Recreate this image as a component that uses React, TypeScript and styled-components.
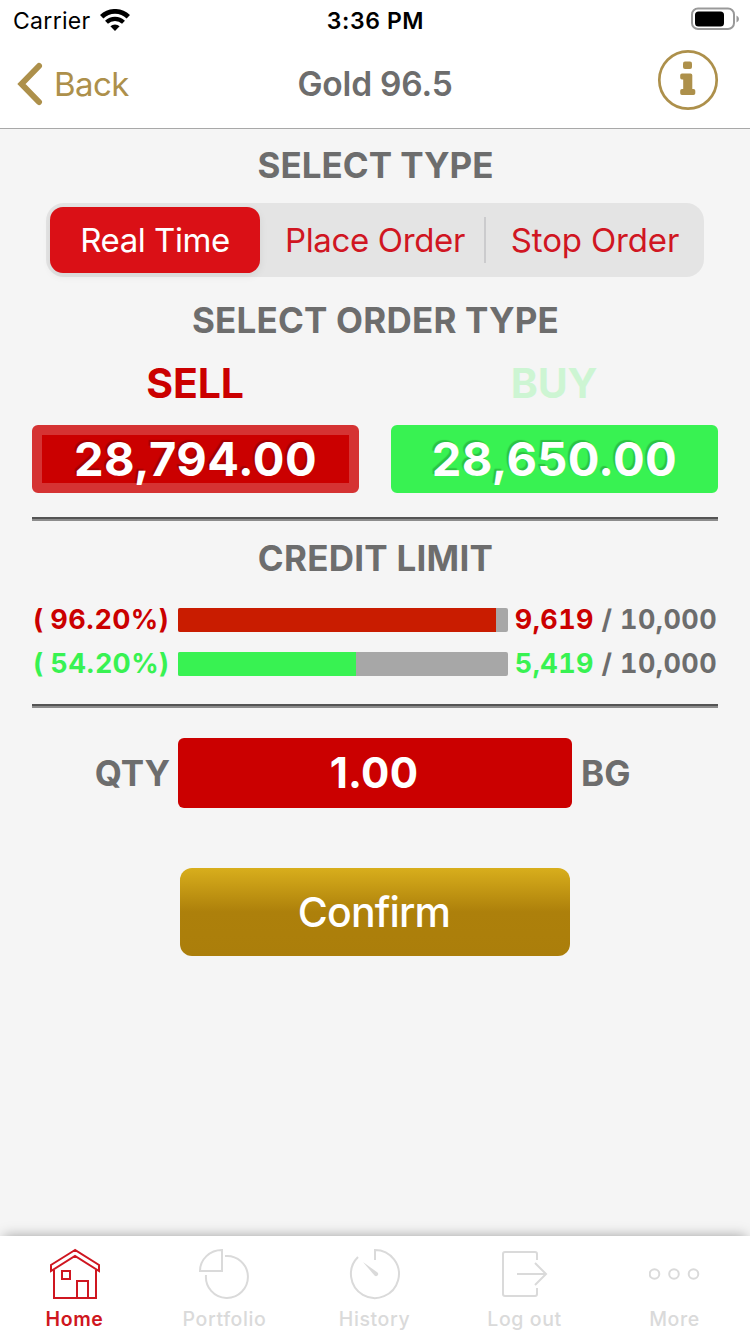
import React from "react";
import styled, { createGlobalStyle } from "styled-components";

const GREY = "#6d6d6d";
const GOLD = "#ad904b";
const RED = "#cb0000";
const GREEN = "#38f252";

const GlobalStyle = createGlobalStyle`
  * { box-sizing: border-box; }
  body { margin: 0; background: #f5f5f5; }
  button { border: 0; padding: 0; margin: 0; background: none; font: inherit; color: inherit; }
`;

const Screen = styled.div`
  width: 750px;
  height: 1334px;
  display: flex;
  flex-direction: column;
  overflow: hidden;
  background: #f5f5f5;
  color: ${GREY};
  font-family: Inter, "Liberation Sans", sans-serif;
  white-space: nowrap;
`;

const Header = styled.header`
  height: 129px;
  flex: none;
  background: #fff;
  border-bottom: 1px solid #a8a8a8;
`;

const StatusBar = styled.div`
  height: 40px;
  display: grid;
  grid-template-columns: 1fr auto 1fr;
  align-items: center;
  padding: 0 11px 0 13px;
  color: #000;
`;

const Carrier = styled.div`
  display: flex;
  align-items: center;
  gap: 9px;
  font-size: 23px;
  line-height: 40px;
  letter-spacing: 0.3px;
  padding-top: 1px;
`;

const Clock = styled.div`
  font-size: 23px;
  font-weight: 600;
  line-height: 40px;
  letter-spacing: 0.6px;
  padding-top: 1px;
  margin-left: -1px;
`;

const BatteryIcon = styled.svg`
  justify-self: end;
  margin-bottom: 3px;
`;

const NavBar = styled.div`
  height: 88px;
  display: grid;
  grid-template-columns: 1fr auto 1fr;
  align-items: center;
  padding: 0 31px 0 17px;
`;

const BackButton = styled.button`
  display: flex;
  align-items: center;
  gap: 11px;
  color: ${GOLD};
  font-size: 33px;
  line-height: 88px;
  letter-spacing: -0.6px;
`;

const Title = styled.h1`
  margin: 0 0 0 14px;
  font-size: 33.5px;
  font-weight: 600;
  line-height: 88px;
  letter-spacing: -0.2px;
`;

const InfoButton = styled.button`
  justify-self: end;
  display: flex;
  margin-bottom: 8px;
`;

const Main = styled.main`
  flex: 1;
  padding: 0 32px;
  display: flex;
  flex-direction: column;
`;

const SectionTitle = styled.h2<{ $height: number; $line?: number; $spacing?: number }>`
  margin: 0;
  padding-left: 1px;
  height: ${(p) => p.$height}px;
  line-height: ${(p) => p.$line ?? p.$height}px;
  text-align: center;
  font-size: 35px;
  font-weight: 700;
  letter-spacing: ${(p) => p.$spacing ?? 0}px;
`;

const Segments = styled.div`
  height: 74px;
  margin: 0 14px;
  padding: 4px 0 4px 4px;
  display: grid;
  grid-template-columns: 210px 6px 218px 2px 218px;
  align-items: center;
  border-radius: 18px;
  background: #e4e4e4;
`;

const Segment = styled.button<{ $active?: boolean; $spacing: number }>`
  height: 66px;
  border-radius: 13px;
  font-size: 33px;
  letter-spacing: ${(p) => p.$spacing}px;
  text-align: center;
  color: ${(p) => (p.$active ? "#fff" : "#d01622")};
  background: ${(p) => (p.$active ? "#da1016" : "transparent")};
  box-shadow: ${(p) => (p.$active ? "0 3px 8px rgba(0,0,0,.07)" : "none")};
`;

const SegmentDivider = styled.span<{ $visible?: boolean }>`
  height: 46px;
  background: ${(p) => (p.$visible ? "#cbcbcd" : "transparent")};
`;

const OrderSides = styled.div`
  display: grid;
  grid-template-columns: 1fr 1fr;
  column-gap: 32px;
`;

const SideLabel = styled.div<{ $color: string }>`
  height: 60px;
  line-height: 37px;
  padding-right: 1px;
  text-align: center;
  font-size: 41px;
  font-weight: 700;
  letter-spacing: -0.2px;
  color: ${(p) => p.$color};
`;

const PriceButton = styled.button<{ $color: string; $frame?: string; $spacing: number }>`
  height: 68px;
  border-radius: 6px;
  border: 10px solid ${(p) => p.$frame ?? p.$color};
  background: ${(p) => p.$color};
  color: #fff;
  font-size: 47px;
  font-weight: 700;
  line-height: 48px;
  letter-spacing: ${(p) => p.$spacing}px;
  text-shadow: -2px -2px 1px rgba(0, 0, 0, 0.2);
`;

const Rule = styled.hr`
  width: 100%;
  height: 4px;
  flex: none;
  margin: 0;
  border: 0;
  border-top: 2px solid #545454;
  background: #8c8c8c;
`;

const CreditList = styled.div`
  display: flex;
  flex-direction: column;
  padding: 3px 0 18px;
`;

const CreditRow = styled.div`
  height: 44px;
  display: grid;
  grid-template-columns: 146px 330px 1fr;
  align-items: center;
  font-size: 27px;
  font-weight: 650;
  line-height: 44px;
  letter-spacing: 0.4px;
`;

const Percent = styled.span<{ $color: string }>`
  padding-left: 1px;
  color: ${(p) => p.$color};
`;

const Track = styled.div`
  height: 24px;
  border-radius: 2px;
  overflow: hidden;
  background: #a7a7a7;
`;

const Fill = styled.div<{ $color: string }>`
  height: 100%;
  background: ${(p) => p.$color};
`;

const Amount = styled.span`
  text-align: right;
  padding-right: 1px;
  font-variant-numeric: tabular-nums;
`;

const Used = styled.span<{ $color: string }>`
  color: ${(p) => p.$color};
`;

const QuantityRow = styled.div`
  margin-top: 30px;
  display: grid;
  grid-template-columns: 138px 394px 1fr;
  column-gap: 8px;
  align-items: center;
  font-size: 35px;
  font-weight: 650;
`;

const QuantityLabel = styled.label`
  text-align: right;
`;

const QuantityUnit = styled.span`
  padding-left: 1px;
`;

const QuantityInput = styled.div`
  height: 70px;
  padding-right: 2px;
  border-radius: 6px;
  background: ${RED};
  color: #fff;
  font-size: 42px;
  font-weight: 650;
  line-height: 70px;
  letter-spacing: 0.2px;
  text-align: center;
`;

const ConfirmButton = styled.button`
  align-self: center;
  width: 390px;
  height: 88px;
  margin-top: 60px;
  padding-right: 2px;
  border-radius: 12px;
  background: linear-gradient(#d8ae1c 0%, #ad800b 50%, #ab7e0b 100%);
  color: #fff;
  font-size: 41px;
  font-weight: 550;
  line-height: 88px;
  letter-spacing: -0.85px;
`;

const TabBar = styled.nav`
  height: 98px;
  flex: none;
  display: grid;
  grid-template-columns: repeat(5, 1fr);
  background: #fff;
  box-shadow: 0 -4px 12px -4px rgba(0, 0, 0, 0.35);
`;

const Tab = styled.button<{ $active?: boolean }>`
  display: flex;
  flex-direction: column;
  align-items: center;
  padding-top: 12px;
  color: ${(p) => (p.$active ? "#cf1620" : "#dadada")};
  font-size: 19.5px;
  font-weight: ${(p) => (p.$active ? 560 : 500)};
  letter-spacing: 0.6px;
  line-height: 24px;

  svg {
    margin-bottom: 7px;
    fill: none;
    stroke: currentColor;
    stroke-width: 2;
  }
`;

const TabLabel = styled.span`
  padding-right: 1px;
`;

const WifiGlyph = () => (
  <svg width="30" height="24" viewBox="0 0 30 24" fill="none" stroke="#000">
    <path d="M1.700 7.800a19 19 0 0 1 26.600 0" strokeWidth="4.800" />
    <path d="M6.500 13.300a12.300 12.300 0 0 1 17 0" strokeWidth="4.200" />
    <path d="M15 21.900l-4.600-4.600a6.600 6.600 0 0 1 9.200 0z" fill="#000" stroke="none" />
  </svg>
);

const HomeIcon = () => (
  <svg width="52" height="52" viewBox="0 0 52 52">
    <path d="M26 2L2 17v6L26 8l24 15v-6zM5 22v28h42V22M13 23h8v8h-8zM28 50V33h11v17" />
  </svg>
);

const PortfolioIcon = () => (
  <svg width="52" height="52" viewBox="0 0 52 52">
    <path d="M23 2v21H1A22 21 0 0 1 23 2zM26 8a21 21 0 1 1-19 19" />
  </svg>
);

const HistoryIcon = () => (
  <svg width="52" height="52" viewBox="0 0 52 52">
    <path d="M26 12V2a24 24 0 1 1-17 7" />
    <path d="M14 14l14.500 10.500a2 2 0 0 1-3 3z" fill="currentColor" stroke="none" />
  </svg>
);

const LogoutIcon = () => (
  <svg width="52" height="52" viewBox="0 0 52 52">
    <path d="M38 12V6a2 2 0 0 0-2-2H6a2 2 0 0 0-2 2v40a2 2 0 0 0 2 2h30a2 2 0 0 0 2-2v-6M18 26h29M36 15l11 11-11 11" />
  </svg>
);

const MoreIcon = () => (
  <svg width="52" height="52" viewBox="0 0 52 52">
    <circle cx="5.500" cy="26" r="4.800" />
    <circle cx="25" cy="26" r="4.800" />
    <circle cx="44.500" cy="26" r="4.800" />
  </svg>
);

const credit = [
  { percent: "( 96.20%)", share: 96.4, used: "9,619", color: RED, bar: "#c91c00" },
  { percent: "( 54.20%)", share: 53.9, used: "5,419", color: GREEN, bar: GREEN },
];

const tabs = [
  { label: "Home", Icon: HomeIcon },
  { label: "Portfolio", Icon: PortfolioIcon },
  { label: "History", Icon: HistoryIcon },
  { label: "Log out", Icon: LogoutIcon },
  { label: "More", Icon: MoreIcon },
];

const Gap = styled.div<{ $size: number }>`
  height: ${(p) => p.$size}px;
  flex: none;
`;

export default function App() {
  return (
    <Screen>
      <GlobalStyle />
      <Header>
        <StatusBar>
          <Carrier>
            Carrier
            <WifiGlyph />
          </Carrier>
          <Clock>3:36 PM</Clock>
          <BatteryIcon width="48" height="24" viewBox="0 0 48 24">
            <rect x="1" y="1.500" width="42" height="20.500" rx="6" fill="none" stroke="#999" strokeWidth="2" />
            <rect x="4" y="4.500" width="29" height="15" rx="3.500" fill="#000" />
            <path d="M45.500 8.500q2.500 1 2.500 3.500t-2.500 3.500z" fill="#999" />
          </BatteryIcon>
        </StatusBar>
        <NavBar>
          <BackButton>
            <svg width="26" height="44" viewBox="0 0 26 44" fill="none" stroke={GOLD} strokeWidth="6" strokeLinecap="round" strokeLinejoin="miter">
              <path d="M22 4L4.500 22l17.500 18" />
            </svg>
            Back
          </BackButton>
          <Title>Gold 96.5</Title>
          <InfoButton aria-label="Info">
            <svg width="62" height="62" viewBox="0 0 62 62">
              <circle cx="31" cy="31" r="28.700" fill="none" stroke={GOLD} strokeWidth="2.700" />
              <rect x="26" y="12.500" width="9" height="7.500" rx="2" fill={GOLD} />
              <path d="M25 24.500h8.500a1.800 1.800 0 0 1 1.800 1.800V40h1.200a1.800 1.800 0 0 1 1.800 1.800v2.400a1.800 1.800 0 0 1-1.800 1.800H25a1.800 1.800 0 0 1-1.800-1.800v-2.400a1.800 1.800 0 0 1 1.800-1.800h1.200V30.500H25a1.800 1.800 0 0 1-1.800-1.800v-2.400A1.800 1.800 0 0 1 25 24.500z" fill={GOLD} />
            </svg>
          </InfoButton>
        </NavBar>
      </Header>
      <Main>
        <SectionTitle $height={74} $line={73}>SELECT TYPE</SectionTitle>
        <Segments>
          <Segment $active $spacing={-0.45}>Real Time</Segment>
          <SegmentDivider />
          <Segment $spacing={-0.35}>Place Order</Segment>
          <SegmentDivider $visible />
          <Segment $spacing={-0.15}>Stop Order</Segment>
        </Segments>
        <SectionTitle $height={88} $line={87} $spacing={0.2}>SELECT ORDER TYPE</SectionTitle>
        <OrderSides>
          <SideLabel $color={RED}>SELL</SideLabel>
          <SideLabel $color="#cdf5d3">BUY</SideLabel>
          <PriceButton $color={RED} $frame="#d53333" $spacing={0.45}>28,794.00</PriceButton>
          <PriceButton $color={GREEN} $spacing={0.35}>28,650.00</PriceButton>
        </OrderSides>
        <Gap $size={24} />
        <Rule />
        <SectionTitle $height={74} $spacing={0.25}>CREDIT LIMIT</SectionTitle>
        <CreditList>
          {credit.map((row) => (
            <CreditRow key={row.used}>
              <Percent $color={row.color}>{row.percent}</Percent>
              <Track>
                <Fill $color={row.bar} style={{ width: `${row.share}%` }} />
              </Track>
              <Amount>
                <Used $color={row.color}>{row.used}</Used> / 10,000
              </Amount>
            </CreditRow>
          ))}
        </CreditList>
        <Rule />
        <QuantityRow>
          <QuantityLabel>QTY</QuantityLabel>
          <QuantityInput>1.00</QuantityInput>
          <QuantityUnit>BG</QuantityUnit>
        </QuantityRow>
        <ConfirmButton>Confirm</ConfirmButton>
      </Main>
      <TabBar>
        {tabs.map(({ label, Icon }, i) => (
          <Tab key={label} $active={i === 0}>
            <Icon />
            <TabLabel>{label}</TabLabel>
          </Tab>
        ))}
      </TabBar>
    </Screen>
  );
}
